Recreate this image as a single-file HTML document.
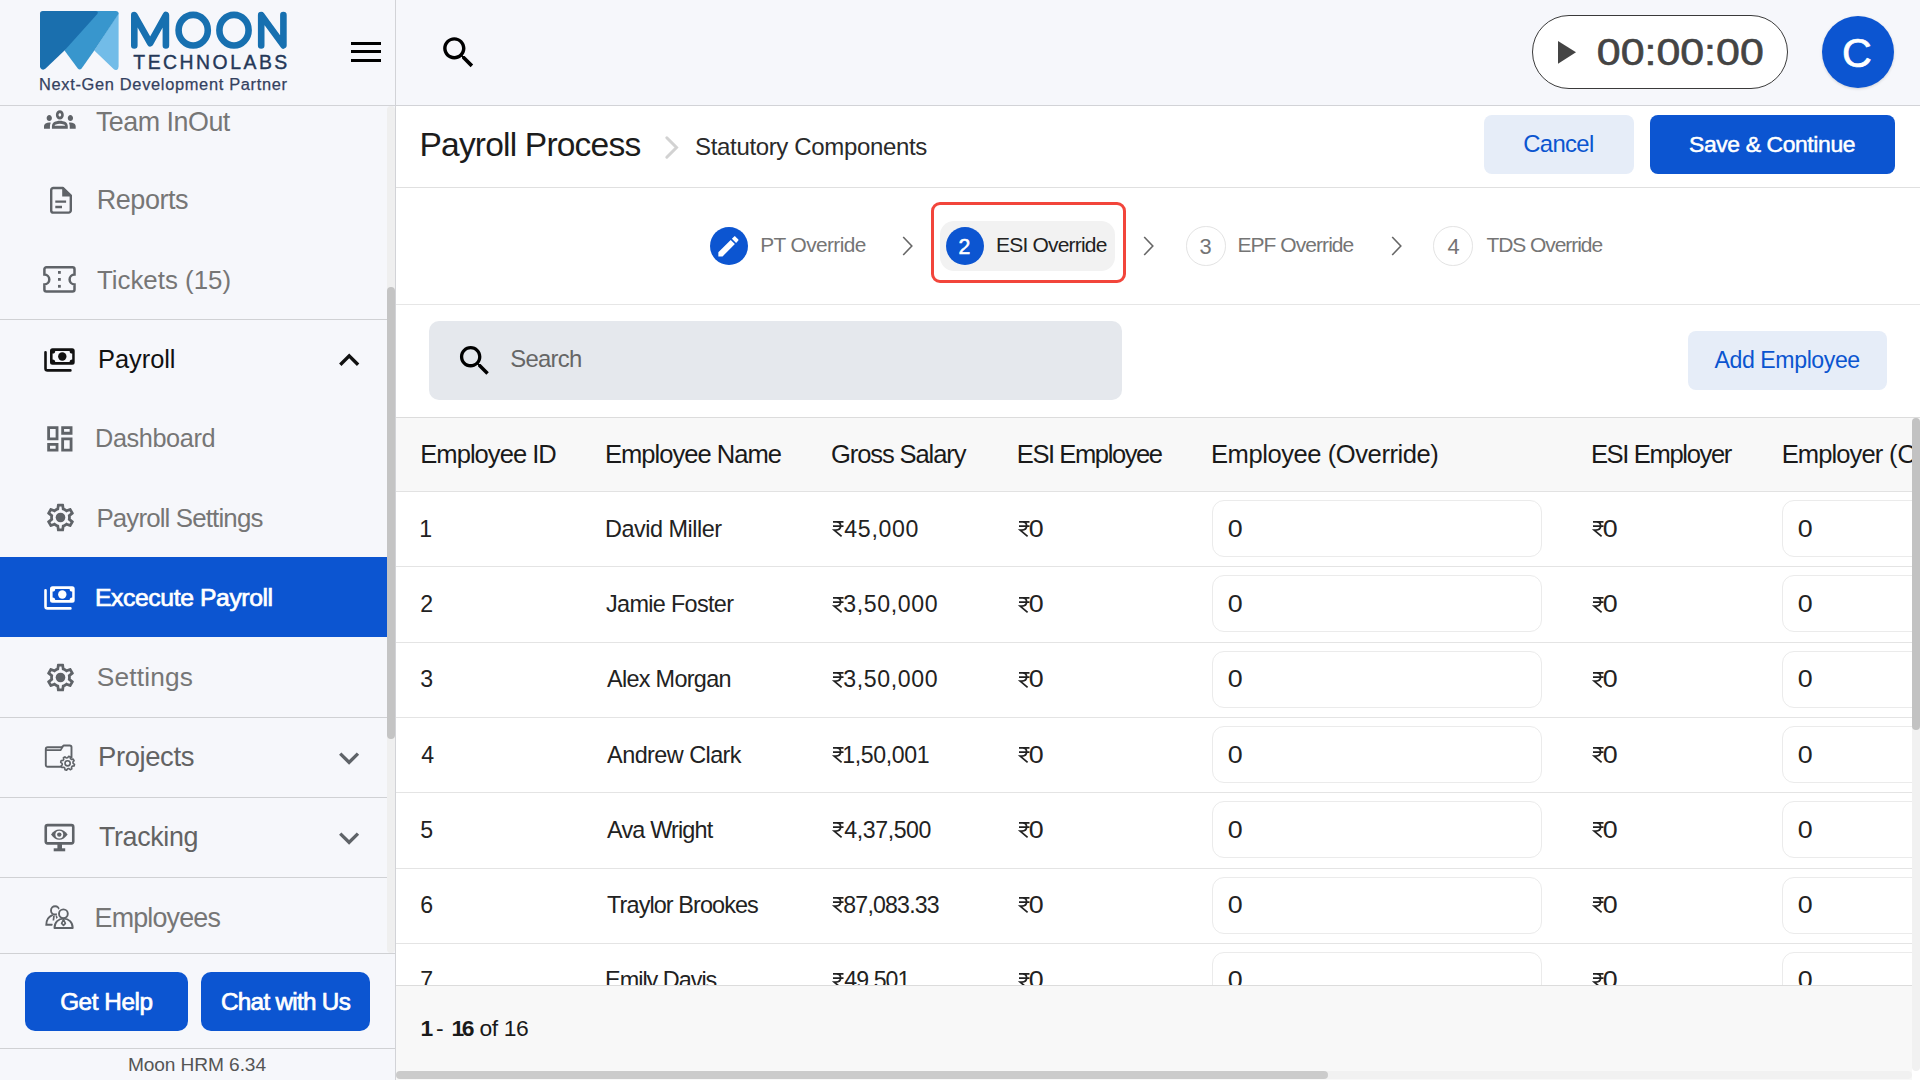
<!DOCTYPE html>
<html lang="en"><head><meta charset="utf-8"><title>Payroll Process - Moon HRM</title>
<style>
*{margin:0;padding:0;box-sizing:border-box}
html,body{width:1920px;height:1080px;overflow:hidden}
body{position:relative;font-family:"Liberation Sans",sans-serif;background:#ffffff}
.a{position:absolute}
.t{position:absolute;white-space:pre}
svg{position:absolute;display:block;overflow:visible}
.hl{position:absolute;height:1px}
</style></head><body>
<!-- ============ SIDEBAR ============ -->
<div class="a" style="left:0;top:0;width:395px;height:1080px;background:#f6f7fb"></div>
<div class="a" style="left:395px;top:0;width:1px;height:1080px;background:#d2d3d7"></div>
<!-- logo -->
<svg style="left:0;top:0" width="300" height="100" viewBox="0 0 300 100">
 <path d="M118.6 13V66.5Q118.6 69.2 116.6 69.9Q115 70.4 113.6 69L94.3 50.4Z" fill="#72bce8"/>
 <path d="M90 11H115.8Q118.6 11 118.6 13.8L94.3 50.4L81.6 68.4Q79.7 70.7 77.8 68.4L64.5 50.4Z" fill="#3896cd"/>
 <path d="M40 13.8Q40 11 42.8 11H95.2Q99 11 97.3 14L64.5 50.4L45.6 68.6Q43.6 70.5 41.6 69.3Q40 68.3 40 66.5Z" fill="#1a6fae"/>
</svg>
<svg style="left:0;top:0" width="300" height="60" viewBox="0 0 300 60"><g fill="none" stroke="#1770b0" stroke-width="6.6" stroke-linecap="round" stroke-linejoin="round"><path d="M134.3 45.4V15L150.2 43.2L165.9 15V45.4"/><ellipse cx="193.2" cy="30.2" rx="14.6" ry="15.3"/><ellipse cx="234" cy="30.2" rx="14.6" ry="15.3"/><path d="M261.2 45.4V15L283.4 45.4V15"/></g></svg>
<div class="t" style="left:133.30px;top:52.75px;font-size:19.36px;line-height:19.36px;letter-spacing:2.522px;font-weight:400;color:#253858;-webkit-text-stroke:0.4px #253858;">TECHNOLABS</div>
<div class="t" style="left:39.00px;top:75.60px;font-size:16.43px;line-height:16.43px;letter-spacing:0.667px;font-weight:400;color:#34415f;-webkit-text-stroke:0.25px #34415f;">Next-Gen Development Partner</div>
<!-- hamburger -->
<div class="a" style="left:351px;top:42px;width:30px;height:3px;background:#000"></div>
<div class="a" style="left:351px;top:50.2px;width:30px;height:3.3px;background:#000"></div>
<div class="a" style="left:351px;top:58.8px;width:30px;height:3.1px;background:#000"></div>
<div class="a" style="left:0;top:105px;width:1920px;height:1px;background:#d2d3d7"></div>

<!-- sidebar scroll region -->
<div class="a" style="left:0;top:106px;width:387px;height:847px;overflow:hidden">
 <div class="a" style="left:0;top:-106px;width:387px;height:1080px">
  <div class="hl" style="left:0;top:319px;width:387px;background:#d0d1d4"></div>
  <div class="hl" style="left:0;top:717px;width:387px;background:#d0d1d4"></div>
  <div class="hl" style="left:0;top:797px;width:387px;background:#d0d1d4"></div>
  <div class="hl" style="left:0;top:877px;width:387px;background:#d0d1d4"></div>
  <div class="a" style="left:0;top:557px;width:387px;height:80px;background:#0c55d1"></div>
 </div>
</div>
<!-- sidebar texts -->
<div class="t" style="left:95.90px;top:108.50px;font-size:26.86px;line-height:26.86px;letter-spacing:-0.489px;font-weight:400;color:#767676;">Team InOut</div>
<div class="t" style="left:96.75px;top:187.10px;font-size:27.0px;line-height:27.0px;letter-spacing:-0.458px;font-weight:400;color:#767676;">Reports</div>
<div class="t" style="left:96.90px;top:267.50px;font-size:25.86px;line-height:25.86px;letter-spacing:0.009px;font-weight:400;color:#767676;">Tickets (15)</div>
<div class="t" style="left:98.00px;top:346.80px;font-size:25.43px;line-height:25.43px;letter-spacing:-0.033px;font-weight:400;color:#111111;">Payroll</div>
<div class="t" style="left:95.10px;top:426.00px;font-size:25.29px;line-height:25.29px;letter-spacing:-0.412px;font-weight:400;color:#767676;">Dashboard</div>
<div class="t" style="left:96.40px;top:506.00px;font-size:25.86px;line-height:25.86px;letter-spacing:-0.847px;font-weight:400;color:#767676;">Payroll Settings</div>
<div class="t" style="left:95.00px;top:586.25px;font-size:24.73px;line-height:24.73px;letter-spacing:-0.400px;font-weight:400;color:#ffffff;-webkit-text-stroke:0.7px #ffffff;">Excecute Payroll</div>
<div class="t" style="left:96.70px;top:663.90px;font-size:26.29px;line-height:26.29px;letter-spacing:0.186px;font-weight:400;color:#767676;">Settings</div>
<div class="t" style="left:98.00px;top:743.40px;font-size:27.43px;line-height:27.43px;letter-spacing:-0.386px;font-weight:400;color:#636363;">Projects</div>
<div class="t" style="left:98.90px;top:823.80px;font-size:26.86px;line-height:26.86px;letter-spacing:-0.343px;font-weight:400;color:#636363;">Tracking</div>
<div class="t" style="left:94.60px;top:904.90px;font-size:26.86px;line-height:26.86px;letter-spacing:-0.825px;font-weight:400;color:#767676;">Employees</div>
<!-- sidebar icons -->
<!-- groups (Team InOut) -->
<svg style="left:44.3px;top:100.8px" width="31.7" height="37" viewBox="0 0 24 24" preserveAspectRatio="none"><path fill="#5f6368" fill-rule="evenodd" d="M4 13c1.1 0 2-.9 2-2s-.9-2-2-2-2 .9-2 2 .9 2 2 2zm1.13 1.1c-.37-.06-.74-.1-1.13-.1-.99 0-1.93.21-2.78.58C.48 14.9 0 15.62 0 16.43V18h4.5v-1.61c0-.83.23-1.61.63-2.29zM20 13c1.1 0 2-.9 2-2s-.9-2-2-2-2 .9-2 2 .9 2 2 2zm4 3.43c0-.81-.48-1.53-1.22-1.85-.85-.37-1.79-.58-2.78-.58-.39 0-.76.04-1.13.1.4.68.63 1.46.63 2.29V18H24v-1.57zm-7.76-2.78c-1.17-.52-2.61-.9-4.24-.9-1.63 0-3.070.39-4.24.9C6.68 14.13 6 15.21 6 16.39V18h12v-1.61c0-1.18-.68-2.26-1.76-2.74zM8.07 16c.09-.23.13-.39.91-.69.97-.38 1.99-.56 3.02-.56s2.05.18 3.02.56c.77.3.81.46.91.69H8.07zM12 8c.55 0 1 .45 1 1s-.45 1-1 1-1-.45-1-1 .45-1 1-1m0-2c-1.66 0-3 1.34-3 3s1.34 3 3 3 3-1.34 3-3-1.34-3-3-3z"/></svg>
<!-- Reports -->
<svg style="left:48px;top:185px" width="28" height="31" viewBox="0 0 28 31"><path d="M3.2 5.1a2.1 2.1 0 0 1 2.1-2.1H15L22.8 10.6V25.4a2.2 2.2 0 0 1-2.2 2.2H5.4a2.2 2.2 0 0 1-2.2-2.2Z" fill="none" stroke="#5f6368" stroke-width="2.4" stroke-linejoin="round"/><path d="M14.2 2.2H15.6L23.8 10.4V11.6H14.2Z" fill="#5f6368"/><path d="M7.3 16.7H18.1M7.3 22H14" stroke="#5f6368" stroke-width="2.3"/></svg>
<!-- ticket -->
<svg style="left:40px;top:263px" width="40" height="33" viewBox="0 0 40 33"><path d="M6.4 4.35H32.5a2 2 0 0 1 2 2V11.6a4.9 4.9 0 0 0 0 9.8V26.5a2 2 0 0 1-2 2H6.4a2 2 0 0 1-2-2V21.4a4.9 4.9 0 0 0 0-9.8V6.35a2 2 0 0 1 2-2Z" fill="none" stroke="#5f6368" stroke-width="2.5"/><rect x="18" y="8" width="2.8" height="2.8" fill="#5f6368"/><rect x="18" y="15" width="2.8" height="2.8" fill="#5f6368"/><rect x="18" y="21.9" width="2.8" height="2.8" fill="#5f6368"/></svg>
<!-- payments (Payroll) -->
<svg style="left:40px;top:344px" width="40" height="30" viewBox="0 0 40 30"><path fill="#111" fill-rule="evenodd" d="M12.5 4.3H32.2a2.5 2.5 0 0 1 2.5 2.5V18.2a2.5 2.5 0 0 1-2.5 2.5H12.5a2.5 2.5 0 0 1-2.5-2.5V6.8a2.5 2.5 0 0 1 2.5-2.5ZM15.2 7A2.6 2.6 0 0 1 12.6 9.6V15.4A2.6 2.6 0 0 1 15.2 18H29.6A2.6 2.6 0 0 1 32.2 15.4V9.6A2.6 2.6 0 0 1 29.6 7Z"/><circle cx="22.3" cy="12.5" r="4.2" fill="#111"/><path d="M5.5 8.3V24.4a2 2 0 0 0 2 2H30.4" fill="none" stroke="#111" stroke-width="2.6" stroke-linecap="round"/></svg>
<!-- expand less -->
<svg style="left:328.8px;top:339.5px" width="40.4" height="40.4" viewBox="0 0 24 24"><path fill="#111" d="M12 8l-6 6 1.41 1.41L12 10.83l4.59 4.58L18 14z"/></svg>
<!-- dashboard -->
<svg style="left:42.7px;top:421.6px" width="33.7" height="33.7" viewBox="0 0 24 24"><path fill="#5f6368" d="M19 5v2h-4V5h4M9 5v6H5V5h4m10 8v6h-4v-6h4M9 17v2H5v-2h4M21 3h-8v6h8V3zM11 3H3v10h8V3zm10 8h-8v10h8V11zm-10 4H3v6h8v-6z"/></svg>
<!-- gear payroll settings -->
<svg style="left:44px;top:500.5px" width="33" height="33" viewBox="0 0 24 24"><path fill="#5f6368" d="M19.43 12.98c.04-.32.07-.64.07-.98 0-.34-.03-.66-.07-.98l2.11-1.65c.19-.15.24-.42.12-.64l-2-3.46c-.09-.16-.26-.25-.44-.25-.06 0-.12.01-.17.03l-2.49 1c-.52-.4-1.08-.73-1.69-.98l-.38-2.65C14.46 2.18 14.25 2 14 2h-4c-.25 0-.46.18-.49.42l-.38 2.65c-.61.25-1.17.59-1.69.98l-2.49-1c-.06-.02-.12-.03-.18-.03-.17 0-.34.09-.43.25l-2 3.46c-.13.22-.07.49.12.64l2.11 1.65c-.04.32-.07.65-.07.98 0 .33.03.66.07.98l-2.11 1.65c-.19.15-.24.42-.12.64l2 3.46c.09.16.26.25.44.25.06 0 .12-.01.17-.03l2.49-1c.52.4 1.08.73 1.69.98l.38 2.65c.03.24.24.42.49.42h4c.25 0 .46-.18.49-.42l.38-2.65c.61-.25 1.17-.59 1.69-.98l2.49 1c.06.02.12.03.18.03.17 0 .34-.09.43-.25l2-3.46c.12-.22.07-.49-.12-.64l-2.11-1.65zm-1.98-1.71c.04.31.05.52.05.73 0 .21-.02.43-.05.73l-.14 1.13.89.7 1.08.84-.7 1.21-1.27-.51-1.04-.42-.9.68c-.43.32-.84.56-1.25.73l-1.06.43-.16 1.13-.2 1.35h-1.4l-.19-1.35-.16-1.13-1.06-.43c-.43-.18-.83-.41-1.23-.71l-.91-.7-1.06.43-1.27.51-.7-1.21 1.08-.84.89-.7-.14-1.13c-.03-.31-.05-.54-.05-.74s.02-.43.05-.73l.14-1.13-.89-.7-1.08-.84.7-1.21 1.27.51 1.04.42.9-.68c.43-.32.84-.56 1.25-.73l1.06-.43.16-1.13.2-1.35h1.39l.19 1.35.16 1.13 1.06.43c.43.18.83.41 1.23.71l.91.7 1.06-.43 1.27-.51.7 1.21-1.07.85-.89.7.14 1.13z"/><circle cx="12" cy="12" r="3.5" fill="#5f6368"/></svg>
<!-- payments white (execute) -->
<svg style="left:40px;top:582px" width="40" height="30" viewBox="0 0 40 30"><path fill="#fff" fill-rule="evenodd" d="M12.5 4.3H32.2a2.5 2.5 0 0 1 2.5 2.5V18.2a2.5 2.5 0 0 1-2.5 2.5H12.5a2.5 2.5 0 0 1-2.5-2.5V6.8a2.5 2.5 0 0 1 2.5-2.5ZM15.2 7A2.6 2.6 0 0 1 12.6 9.6V15.4A2.6 2.6 0 0 1 15.2 18H29.6A2.6 2.6 0 0 1 32.2 15.4V9.6A2.6 2.6 0 0 1 29.6 7Z"/><circle cx="22.3" cy="12.5" r="4.2" fill="#fff"/><path d="M5.5 8.3V24.4a2 2 0 0 0 2 2H30.4" fill="none" stroke="#fff" stroke-width="2.6" stroke-linecap="round"/></svg>
<!-- gear settings -->
<svg style="left:44px;top:660.5px" width="33" height="33" viewBox="0 0 24 24"><path fill="#5f6368" d="M19.43 12.98c.04-.32.07-.64.07-.98 0-.34-.03-.66-.07-.98l2.11-1.65c.19-.15.24-.42.12-.64l-2-3.46c-.09-.16-.26-.25-.44-.25-.06 0-.12.01-.17.03l-2.49 1c-.52-.4-1.08-.73-1.69-.98l-.38-2.65C14.46 2.18 14.25 2 14 2h-4c-.25 0-.46.18-.49.42l-.38 2.65c-.61.25-1.17.59-1.69.98l-2.49-1c-.06-.02-.12-.03-.18-.03-.17 0-.34.09-.43.25l-2 3.46c-.13.22-.07.49.12.64l2.11 1.65c-.04.32-.07.65-.07.98 0 .33.03.66.07.98l-2.11 1.65c-.19.15-.24.42-.12.64l2 3.46c.09.16.26.25.44.25.06 0 .12-.01.17-.03l2.49-1c.52.4 1.08.73 1.69.98l.38 2.65c.03.24.24.42.49.42h4c.25 0 .46-.18.49-.42l.38-2.65c.61-.25 1.17-.59 1.69-.98l2.49 1c.06.02.12.03.18.03.17 0 .34-.09.43-.25l2-3.46c.12-.22.07-.49-.12-.64l-2.11-1.65zm-1.98-1.71c.04.31.05.52.05.73 0 .21-.02.43-.05.73l-.14 1.13.89.7 1.08.84-.7 1.21-1.27-.51-1.04-.42-.9.68c-.43.32-.84.56-1.25.73l-1.06.43-.16 1.13-.2 1.35h-1.4l-.19-1.35-.16-1.13-1.06-.43c-.43-.18-.83-.41-1.23-.71l-.91-.7-1.06.43-1.27.51-.7-1.21 1.08-.84.89-.7-.14-1.13c-.03-.31-.05-.54-.05-.74s.02-.43.05-.73l.14-1.13-.89-.7-1.08-.84.7-1.21 1.27.51 1.04.42.9-.68c.43-.32.84-.56 1.25-.73l1.06-.43.16-1.13.2-1.35h1.39l.19 1.35.16 1.13 1.06.43c.43.18.83.41 1.23.71l.91.7 1.06-.43 1.27-.51.7 1.21-1.07.85-.89.7.14 1.13z"/><circle cx="12" cy="12" r="3.5" fill="#5f6368"/></svg>
<!-- projects folder -->
<svg style="left:38px;top:735px" width="46" height="45" viewBox="0 0 46 45"><path d="M24 31.8H9.6a1.8 1.8 0 0 1-1.8-1.8V14a1.8 1.8 0 0 1 1.8-1.8H23.7L25.7 10.5H31.7a1.8 1.8 0 0 1 1.8 1.8V23.2" fill="none" stroke="#5f6368" stroke-width="1.9" stroke-linejoin="round"/><path d="M7.8 15.2H22.6L24.8 11.6" fill="none" stroke="#5f6368" stroke-width="1.7"/><path d="M35.10 28.30 L36.53 29.29 L36.07 30.98 L34.33 31.10 L33.49 32.19 L33.80 33.90 L32.28 34.77 L30.97 33.63 L29.60 33.80 L28.61 35.23 L26.92 34.77 L26.80 33.03 L25.71 32.19 L24.00 32.50 L23.13 30.98 L24.27 29.67 L24.10 28.30 L22.67 27.31 L23.13 25.62 L24.87 25.50 L25.71 24.41 L25.40 22.70 L26.92 21.83 L28.23 22.97 L29.60 22.80 L30.59 21.37 L32.28 21.83 L32.40 23.57 L33.49 24.41 L35.20 24.10 L36.07 25.62 L34.93 26.93Z" fill="#f6f7fb" stroke="#5f6368" stroke-width="1.6" stroke-linejoin="round"/><circle cx="29.6" cy="28.3" r="2.6" fill="none" stroke="#5f6368" stroke-width="1.6"/></svg>
<!-- expand more -->
<svg style="left:328.65px;top:737.6px" width="40.2" height="40.2" viewBox="0 0 24 24"><path fill="#5f6368" d="M16.59 8.59L12 13.17 7.41 8.59 6 10l6 6 6-6z"/></svg>
<!-- tracking monitor -->
<svg style="left:38px;top:820px" width="46" height="35" viewBox="0 0 46 35"><rect x="7.75" y="5.15" width="27.5" height="18.2" rx="1.8" fill="none" stroke="#5f6368" stroke-width="2.6"/><path d="M13 14.6C15.5 11 18 9.4 21.3 9.4S27 11 29.6 14.6C27 18.2 24.5 19.8 21.3 19.8S15.5 18.2 13 14.6Z" fill="#5f6368"/><circle cx="21.3" cy="14.6" r="3.9" fill="#f6f7fb"/><circle cx="21.3" cy="14.6" r="2.2" fill="#5f6368"/><rect x="19.4" y="24" width="4.6" height="5" fill="#5f6368"/><rect x="15.7" y="28.3" width="11.5" height="3" fill="#5f6368"/></svg>
<svg style="left:328.65px;top:817.7px" width="40.2" height="40.2" viewBox="0 0 24 24"><path fill="#5f6368" d="M16.59 8.59L12 13.17 7.41 8.59 6 10l6 6 6-6z"/></svg>
<!-- employees -->
<svg style="left:40px;top:900px" width="40" height="34" viewBox="0 0 40 34"><circle cx="15.1" cy="10.4" r="4.1" fill="none" stroke="#5f6368" stroke-width="1.9"/><path d="M12.3 15.2C8.6 16.8 6.3 20.5 6.3 24.8H12" fill="none" stroke="#5f6368" stroke-width="1.9" stroke-linecap="round"/><path d="M14 15.5L13.4 20.5M16.4 15.5L17.2 19" stroke="#5f6368" stroke-width="1.7"/><circle cx="23.4" cy="13.8" r="4.4" fill="#f6f7fb" stroke="#f6f7fb" stroke-width="4.5"/><path d="M14.5 28C14.5 22.2 18.5 18.6 23.6 18.6S32.7 22.2 32.7 28Z" fill="#f6f7fb" stroke="#f6f7fb" stroke-width="4.5" stroke-linejoin="round"/><circle cx="23.4" cy="13.8" r="4.4" fill="none" stroke="#5f6368" stroke-width="1.9"/><path d="M14.5 28C14.5 22.2 18.5 18.6 23.6 18.6S32.7 22.2 32.7 28Z" fill="none" stroke="#5f6368" stroke-width="1.9" stroke-linejoin="round"/><path d="M23.5 19.5L21.6 23.4L23.5 25.4L25.4 23.4Z" fill="none" stroke="#5f6368" stroke-width="1.6" stroke-linejoin="round"/></svg>
<!-- sidebar scrollbar -->
<div class="a" style="left:387px;top:106px;width:8px;height:847px;background:#efefef;border-radius:4px"></div>
<div class="a" style="left:387px;top:287px;width:8px;height:452px;background:#c4c4c4;border-radius:4px"></div>
<div class="a" style="left:0;top:953px;width:395px;height:1px;background:#d0d1d4"></div>
<!-- sidebar bottom -->
<div class="a" style="left:25px;top:972px;width:163px;height:59px;background:#0c55d1;border-radius:10px"></div>
<div class="a" style="left:201px;top:972px;width:169px;height:59px;background:#0c55d1;border-radius:10px"></div>
<div class="t" style="left:60.20px;top:989.60px;font-size:24.25px;line-height:24.25px;letter-spacing:-0.429px;font-weight:400;color:#ffffff;-webkit-text-stroke:0.7px #ffffff;">Get Help</div>
<div class="t" style="left:221.00px;top:989.60px;font-size:24.25px;line-height:24.25px;letter-spacing:-0.700px;font-weight:400;color:#ffffff;-webkit-text-stroke:0.7px #ffffff;">Chat with Us</div>
<div class="a" style="left:0;top:1048px;width:395px;height:1px;background:#d0d1d4"></div>
<div class="t" style="left:127.90px;top:1054.50px;font-size:19.14px;line-height:19.14px;letter-spacing:-0.092px;font-weight:400;color:#555555;">Moon HRM 6.34</div>

<!-- ============ TOP BAR ============ -->
<div class="a" style="left:396px;top:0;width:1524px;height:105px;background:#f6f7fb"></div>
<svg style="left:437.85px;top:32.35px" width="41.2" height="41.2" viewBox="0 0 24 24"><path fill="#000" d="M15.5 14h-.79l-.28-.27C15.41 12.59 16 11.11 16 9.5 16 5.91 13.09 3 9.5 3S3 5.91 3 9.5 5.91 16 9.5 16c1.61 0 3.09-.59 4.23-1.57l.27.28v.79l5 4.99L20.49 19l-4.99-5zm-6 0C7.01 14 5 11.99 5 9.5S7.01 5 9.5 5 14 7.01 14 9.5 11.99 14 9.5 14z"/></svg>
<div class="a" style="left:1532px;top:15px;width:256px;height:73.5px;border:1.5px solid #3a3a3a;border-radius:37px;background:#fff"></div>
<svg style="left:1558px;top:41px" width="18" height="23" viewBox="0 0 18 23"><polygon points="0,0 18,11.35 0,22.7" fill="#444"/></svg>
<div class="t" style="left:1597.00px;top:34.80px;font-size:36.03px;line-height:36.03px;letter-spacing:0.000px;font-weight:400;color:#444444;-webkit-text-stroke:0.6px #444444;transform:scaleX(1.1906);transform-origin:1.0px 0;">00:00:00</div>
<div class="a" style="left:1822px;top:16px;width:72px;height:72px;border-radius:50%;background:#0c55d1;box-shadow:0 1px 3px rgba(0,0,0,.15)"></div>
<div class="t" style="left:1842.00px;top:33.00px;font-size:41.18px;line-height:41.18px;letter-spacing:0.000px;font-weight:400;color:#ffffff;-webkit-text-stroke:0.7px #ffffff;">C</div>

<!-- ============ BREADCRUMB ============ -->
<div class="t" style="left:419.50px;top:128.00px;font-size:33.57px;line-height:33.57px;letter-spacing:-0.821px;font-weight:400;color:#1c1c1c;">Payroll Process</div>
<svg style="left:665px;top:136px" width="14" height="23" viewBox="0 0 14 23"><path d="M1.8 1.8L11.5 11.5 1.8 21.2" fill="none" stroke="#d2d2d2" stroke-width="3" stroke-linecap="round"/></svg>
<div class="t" style="left:695.10px;top:135.20px;font-size:24.0px;line-height:24.0px;letter-spacing:-0.347px;font-weight:400;color:#2a2a2a;">Statutory Components</div>
<div class="a" style="left:1484px;top:115px;width:150px;height:58.5px;background:#e6edf8;border-radius:8px"></div>
<div class="t" style="left:1523.20px;top:132.20px;font-size:23.86px;line-height:23.86px;letter-spacing:-0.640px;font-weight:400;color:#0b55d0;">Cancel</div>
<div class="a" style="left:1650px;top:115px;width:245px;height:58.5px;background:#0c55d1;border-radius:8px"></div>
<div class="t" style="left:1689.00px;top:133.20px;font-size:22.88px;line-height:22.88px;letter-spacing:-0.371px;font-weight:400;color:#ffffff;-webkit-text-stroke:0.5px #ffffff;">Save &amp; Continue</div>
<div class="a" style="left:396px;top:187px;width:1524px;height:1px;background:#e0e0e0"></div>

<!-- ============ STEPPER ============ -->
<div class="a" style="left:710px;top:227px;width:38px;height:38px;border-radius:50%;background:#0c55d1"></div>
<svg style="left:714.8px;top:232.6px" width="26.8" height="26.8" viewBox="0 0 24 24"><path fill="#fff" d="M3 17.25V21h3.75L17.81 9.94l-3.75-3.75L3 17.25zM20.71 7.04c.39-.39.39-1.02 0-1.41l-2.34-2.34c-.39-.39-1.02-.39-1.41 0l-1.83 1.83 3.75 3.75 1.83-1.83z"/></svg>
<div class="t" style="left:760.20px;top:234.90px;font-size:20.86px;line-height:20.86px;letter-spacing:-0.590px;font-weight:400;color:#757575;">PT Override</div>
<svg style="left:902px;top:236px" width="11" height="20" viewBox="0 0 11 20"><path d="M1.2 1l8.6 9L1.2 19" fill="none" stroke="#666" stroke-width="1.6"/></svg>
<div class="a" style="left:930.5px;top:201.5px;width:195px;height:81px;border:3.5px solid #f2453b;border-radius:9px"></div>
<div class="a" style="left:940px;top:221px;width:175px;height:49.5px;border-radius:14px;background:#f2f2f2"></div>
<div class="a" style="left:946px;top:227px;width:38px;height:38px;border-radius:50%;background:#0c55d1"></div>
<div class="t" style="left:958.60px;top:236.70px;font-size:21.3px;line-height:21.3px;letter-spacing:0.000px;font-weight:400;color:#ffffff;-webkit-text-stroke:0.5px #ffffff;">2</div>
<div class="t" style="left:996.00px;top:234.00px;font-size:21.0px;line-height:21.0px;letter-spacing:-0.800px;font-weight:400;color:#222222;">ESI Override</div>
<svg style="left:1143px;top:236px" width="11" height="20" viewBox="0 0 11 20"><path d="M1.2 1l8.6 9L1.2 19" fill="none" stroke="#666" stroke-width="1.6"/></svg>
<div class="a" style="left:1186.3px;top:226px;width:39.5px;height:39.5px;border-radius:50%;border:1px solid #e3e3e3"></div>
<div class="t" style="left:1199.40px;top:235.70px;font-size:21.88px;line-height:21.88px;letter-spacing:0.000px;font-weight:400;color:#757575;">3</div>
<div class="t" style="left:1237.40px;top:234.00px;font-size:21.0px;line-height:21.0px;letter-spacing:-0.936px;font-weight:400;color:#757575;">EPF Override</div>
<svg style="left:1390.5px;top:236px" width="11" height="20" viewBox="0 0 11 20"><path d="M1.2 1l8.6 9L1.2 19" fill="none" stroke="#666" stroke-width="1.6"/></svg>
<div class="a" style="left:1433.3px;top:226px;width:39.5px;height:39.5px;border-radius:50%;border:1px solid #e3e3e3"></div>
<div class="t" style="left:1447.50px;top:235.70px;font-size:21.88px;line-height:21.88px;letter-spacing:0.000px;font-weight:400;color:#757575;">4</div>
<div class="t" style="left:1486.40px;top:234.00px;font-size:21.0px;line-height:21.0px;letter-spacing:-1.055px;font-weight:400;color:#757575;">TDS Override</div>
<div class="a" style="left:396px;top:304px;width:1524px;height:1px;background:#e6e6e6"></div>

<!-- ============ SEARCH ROW ============ -->
<div class="a" style="left:429px;top:321px;width:693px;height:79px;background:#e5e8ed;border-radius:10px"></div>
<svg style="left:454.55px;top:340.85px" width="39.6" height="39.6" viewBox="0 0 24 24"><path fill="#000" d="M15.5 14h-.79l-.28-.27C15.41 12.59 16 11.11 16 9.5 16 5.91 13.09 3 9.5 3S3 5.910 3 9.5 5.91 16 9.5 16c1.61 0 3.09-.59 4.23-1.57l.27.28v.79l5 4.99L20.49 19l-4.99-5zm-6 0C7.01 14 5 11.99 5 9.5S7.01 5 9.5 5 14 7.01 14 9.5 11.99 14 9.5 14z"/></svg>
<div class="t" style="left:510.30px;top:346.50px;font-size:23.86px;line-height:23.86px;letter-spacing:-0.720px;font-weight:400;color:#666666;">Search</div>
<div class="a" style="left:1688px;top:331px;width:199px;height:58.5px;background:#e6edf8;border-radius:8px"></div>
<div class="t" style="left:1714.50px;top:348.90px;font-size:23.14px;line-height:23.14px;letter-spacing:-0.427px;font-weight:400;color:#0b55d0;">Add Employee</div>

<!-- ============ TABLE ============ -->
<div class="a" style="left:396px;top:417px;width:1524px;height:1px;background:#dcdcdc"></div>
<div class="a" style="left:396px;top:418px;width:1524px;height:73px;background:#f8f8f8"></div>
<div class="a" style="left:396px;top:491px;width:1524px;height:1px;background:#e2e2e2"></div>
<div class="a" id="hdr" style="left:396px;top:0;width:1516px;height:1080px;overflow:hidden;clip-path:inset(418px 0 0 0)">
 <div class="a" style="left:-396px;top:0;width:1920px;height:1080px">
<div class="t" style="left:420.30px;top:441.90px;font-size:25.57px;line-height:25.57px;letter-spacing:-0.980px;font-weight:400;color:#1a1a1a;">Employee ID</div>
<div class="t" style="left:604.90px;top:441.90px;font-size:25.57px;line-height:25.57px;letter-spacing:-0.992px;font-weight:400;color:#1a1a1a;">Employee Name</div>
<div class="t" style="left:831.00px;top:441.90px;font-size:25.57px;line-height:25.57px;letter-spacing:-1.118px;font-weight:400;color:#1a1a1a;">Gross Salary</div>
<div class="t" style="left:1016.75px;top:441.90px;font-size:25.57px;line-height:25.57px;letter-spacing:-1.423px;font-weight:400;color:#1a1a1a;">ESI Employee</div>
<div class="t" style="left:1211.00px;top:441.90px;font-size:25.57px;line-height:25.57px;letter-spacing:-0.444px;font-weight:400;color:#1a1a1a;">Employee (Override)</div>
<div class="t" style="left:1590.90px;top:441.90px;font-size:25.57px;line-height:25.57px;letter-spacing:-1.345px;font-weight:400;color:#1a1a1a;">ESI Employer</div>
<div class="t" style="left:1781.70px;top:441.90px;font-size:25.57px;line-height:25.57px;letter-spacing:-0.914px;font-weight:400;color:#1a1a1a;">Employer</div>
<div class="t" style="left:1889.00px;top:441.90px;font-size:25.57px;line-height:25.57px;letter-spacing:0.000px;font-weight:400;color:#1a1a1a;">(Override)</div>
 </div>
</div>
<div class="a" id="rows" style="left:396px;top:492px;width:1516px;height:493px;overflow:hidden">
 <div class="a" style="left:-396px;top:-492px;width:1920px;height:1080px">
<div class="a" style="left:1212px;top:500px;width:330px;height:57px;border:1px solid #ebebeb;border-radius:12px;background:#fff"></div>
<div class="a" style="left:1782px;top:500px;width:330px;height:57px;border:1px solid #ebebeb;border-radius:12px;background:#fff"></div>
<svg style="left:833px;top:521.40px" width="10.5" height="15.6" viewBox="0 0 10.5 15.6"><path d="M0 0.9H10.5M0 5.2H10.5M0.4 0.9H3.6C6.6 0.9 7.6 2.8 7.6 5.1C7.6 7.6 5.7 9.1 2.8 9.1H1.2L8.6 15.4" fill="none" stroke="#222" stroke-width="1.75"/></svg>
<svg style="left:1018.7px;top:521.40px" width="10.5" height="15.6" viewBox="0 0 10.5 15.6"><path d="M0 0.9H10.5M0 5.2H10.5M0.4 0.9H3.6C6.6 0.9 7.6 2.8 7.6 5.1C7.6 7.6 5.7 9.1 2.8 9.1H1.2L8.6 15.4" fill="none" stroke="#222" stroke-width="1.75"/></svg>
<svg style="left:1593px;top:521.40px" width="10.5" height="15.6" viewBox="0 0 10.5 15.6"><path d="M0 0.9H10.5M0 5.2H10.5M0.4 0.9H3.6C6.6 0.9 7.6 2.8 7.6 5.1C7.6 7.6 5.7 9.1 2.8 9.1H1.2L8.6 15.4" fill="none" stroke="#222" stroke-width="1.75"/></svg>
<div class="t" style="left:419.30px;top:518.00px;font-size:23.14px;line-height:23.14px;letter-spacing:0.000px;font-weight:400;color:#222222;">1</div>
<div class="t" style="left:605.10px;top:518.00px;font-size:23.43px;line-height:23.43px;letter-spacing:-0.491px;font-weight:400;color:#222222;">David Miller</div>
<div class="t" style="left:844.30px;top:518.00px;font-size:23.14px;line-height:23.14px;letter-spacing:0.680px;font-weight:400;color:#222222;">45,000</div>
<div class="t" style="left:1029.00px;top:518.00px;font-size:23.14px;line-height:23.14px;letter-spacing:0.000px;font-weight:400;color:#222222;transform:scaleX(1.16);transform-origin:1.0px 0;">0</div>
<div class="t" style="left:1228.30px;top:518.00px;font-size:23.14px;line-height:23.14px;letter-spacing:0.000px;font-weight:400;color:#222222;transform:scaleX(1.16);transform-origin:1.0px 0;">0</div>
<div class="t" style="left:1603.30px;top:518.00px;font-size:23.14px;line-height:23.14px;letter-spacing:0.000px;font-weight:400;color:#222222;transform:scaleX(1.16);transform-origin:1.0px 0;">0</div>
<div class="t" style="left:1798.40px;top:518.00px;font-size:23.14px;line-height:23.14px;letter-spacing:0.000px;font-weight:400;color:#222222;transform:scaleX(1.16);transform-origin:1.0px 0;">0</div>
<div class="hl" style="left:396px;top:566px;width:1524px;background:#e4e4e4"></div>
<div class="a" style="left:1212px;top:575px;width:330px;height:57px;border:1px solid #ebebeb;border-radius:12px;background:#fff"></div>
<div class="a" style="left:1782px;top:575px;width:330px;height:57px;border:1px solid #ebebeb;border-radius:12px;background:#fff"></div>
<svg style="left:833px;top:596.60px" width="10.5" height="15.6" viewBox="0 0 10.5 15.6"><path d="M0 0.9H10.5M0 5.2H10.5M0.4 0.9H3.6C6.6 0.9 7.6 2.8 7.6 5.1C7.6 7.6 5.7 9.1 2.8 9.1H1.2L8.6 15.4" fill="none" stroke="#222" stroke-width="1.75"/></svg>
<svg style="left:1018.7px;top:596.60px" width="10.5" height="15.6" viewBox="0 0 10.5 15.6"><path d="M0 0.9H10.5M0 5.2H10.5M0.4 0.9H3.6C6.6 0.9 7.6 2.8 7.6 5.1C7.6 7.6 5.7 9.1 2.8 9.1H1.2L8.6 15.4" fill="none" stroke="#222" stroke-width="1.75"/></svg>
<svg style="left:1593px;top:596.60px" width="10.5" height="15.6" viewBox="0 0 10.5 15.6"><path d="M0 0.9H10.5M0 5.2H10.5M0.4 0.9H3.6C6.6 0.9 7.6 2.8 7.6 5.1C7.6 7.6 5.7 9.1 2.8 9.1H1.2L8.6 15.4" fill="none" stroke="#222" stroke-width="1.75"/></svg>
<div class="t" style="left:420.30px;top:593.20px;font-size:23.14px;line-height:23.14px;letter-spacing:0.000px;font-weight:400;color:#222222;">2</div>
<div class="t" style="left:606.10px;top:593.20px;font-size:23.43px;line-height:23.43px;letter-spacing:-0.682px;font-weight:400;color:#222222;">Jamie Foster</div>
<div class="t" style="left:843.30px;top:593.20px;font-size:23.14px;line-height:23.14px;letter-spacing:0.614px;font-weight:400;color:#222222;">3,50,000</div>
<div class="t" style="left:1029.00px;top:593.20px;font-size:23.14px;line-height:23.14px;letter-spacing:0.000px;font-weight:400;color:#222222;transform:scaleX(1.16);transform-origin:1.0px 0;">0</div>
<div class="t" style="left:1228.30px;top:593.20px;font-size:23.14px;line-height:23.14px;letter-spacing:0.000px;font-weight:400;color:#222222;transform:scaleX(1.16);transform-origin:1.0px 0;">0</div>
<div class="t" style="left:1603.30px;top:593.20px;font-size:23.14px;line-height:23.14px;letter-spacing:0.000px;font-weight:400;color:#222222;transform:scaleX(1.16);transform-origin:1.0px 0;">0</div>
<div class="t" style="left:1798.40px;top:593.20px;font-size:23.14px;line-height:23.14px;letter-spacing:0.000px;font-weight:400;color:#222222;transform:scaleX(1.16);transform-origin:1.0px 0;">0</div>
<div class="hl" style="left:396px;top:642px;width:1524px;background:#e4e4e4"></div>
<div class="a" style="left:1212px;top:651px;width:330px;height:57px;border:1px solid #ebebeb;border-radius:12px;background:#fff"></div>
<div class="a" style="left:1782px;top:651px;width:330px;height:57px;border:1px solid #ebebeb;border-radius:12px;background:#fff"></div>
<svg style="left:833px;top:671.80px" width="10.5" height="15.6" viewBox="0 0 10.5 15.6"><path d="M0 0.9H10.5M0 5.2H10.5M0.4 0.9H3.6C6.6 0.9 7.6 2.8 7.6 5.1C7.6 7.6 5.7 9.1 2.8 9.1H1.2L8.6 15.4" fill="none" stroke="#222" stroke-width="1.75"/></svg>
<svg style="left:1018.7px;top:671.80px" width="10.5" height="15.6" viewBox="0 0 10.5 15.6"><path d="M0 0.9H10.5M0 5.2H10.5M0.4 0.9H3.6C6.6 0.9 7.6 2.8 7.6 5.1C7.6 7.6 5.7 9.1 2.8 9.1H1.2L8.6 15.4" fill="none" stroke="#222" stroke-width="1.75"/></svg>
<svg style="left:1593px;top:671.80px" width="10.5" height="15.6" viewBox="0 0 10.5 15.6"><path d="M0 0.9H10.5M0 5.2H10.5M0.4 0.9H3.6C6.6 0.9 7.6 2.8 7.6 5.1C7.6 7.6 5.7 9.1 2.8 9.1H1.2L8.6 15.4" fill="none" stroke="#222" stroke-width="1.75"/></svg>
<div class="t" style="left:420.30px;top:668.40px;font-size:23.14px;line-height:23.14px;letter-spacing:0.000px;font-weight:400;color:#222222;">3</div>
<div class="t" style="left:607.10px;top:668.40px;font-size:23.43px;line-height:23.43px;letter-spacing:-0.710px;font-weight:400;color:#222222;">Alex Morgan</div>
<div class="t" style="left:843.30px;top:668.40px;font-size:23.14px;line-height:23.14px;letter-spacing:0.614px;font-weight:400;color:#222222;">3,50,000</div>
<div class="t" style="left:1029.00px;top:668.40px;font-size:23.14px;line-height:23.14px;letter-spacing:0.000px;font-weight:400;color:#222222;transform:scaleX(1.16);transform-origin:1.0px 0;">0</div>
<div class="t" style="left:1228.30px;top:668.40px;font-size:23.14px;line-height:23.14px;letter-spacing:0.000px;font-weight:400;color:#222222;transform:scaleX(1.16);transform-origin:1.0px 0;">0</div>
<div class="t" style="left:1603.30px;top:668.40px;font-size:23.14px;line-height:23.14px;letter-spacing:0.000px;font-weight:400;color:#222222;transform:scaleX(1.16);transform-origin:1.0px 0;">0</div>
<div class="t" style="left:1798.40px;top:668.40px;font-size:23.14px;line-height:23.14px;letter-spacing:0.000px;font-weight:400;color:#222222;transform:scaleX(1.16);transform-origin:1.0px 0;">0</div>
<div class="hl" style="left:396px;top:717px;width:1524px;background:#e4e4e4"></div>
<div class="a" style="left:1212px;top:726px;width:330px;height:57px;border:1px solid #ebebeb;border-radius:12px;background:#fff"></div>
<div class="a" style="left:1782px;top:726px;width:330px;height:57px;border:1px solid #ebebeb;border-radius:12px;background:#fff"></div>
<svg style="left:833px;top:747.00px" width="10.5" height="15.6" viewBox="0 0 10.5 15.6"><path d="M0 0.9H10.5M0 5.2H10.5M0.4 0.9H3.6C6.6 0.9 7.6 2.8 7.6 5.1C7.6 7.6 5.7 9.1 2.8 9.1H1.2L8.6 15.4" fill="none" stroke="#222" stroke-width="1.75"/></svg>
<svg style="left:1018.7px;top:747.00px" width="10.5" height="15.6" viewBox="0 0 10.5 15.6"><path d="M0 0.9H10.5M0 5.2H10.5M0.4 0.9H3.6C6.6 0.9 7.6 2.8 7.6 5.1C7.6 7.6 5.7 9.1 2.8 9.1H1.2L8.6 15.4" fill="none" stroke="#222" stroke-width="1.75"/></svg>
<svg style="left:1593px;top:747.00px" width="10.5" height="15.6" viewBox="0 0 10.5 15.6"><path d="M0 0.9H10.5M0 5.2H10.5M0.4 0.9H3.6C6.6 0.9 7.6 2.8 7.6 5.1C7.6 7.6 5.7 9.1 2.8 9.1H1.2L8.6 15.4" fill="none" stroke="#222" stroke-width="1.75"/></svg>
<div class="t" style="left:421.30px;top:743.60px;font-size:23.14px;line-height:23.14px;letter-spacing:0.000px;font-weight:400;color:#222222;">4</div>
<div class="t" style="left:607.10px;top:743.60px;font-size:23.43px;line-height:23.43px;letter-spacing:-0.555px;font-weight:400;color:#222222;">Andrew Clark</div>
<div class="t" style="left:842.30px;top:743.60px;font-size:23.14px;line-height:23.14px;letter-spacing:-0.386px;font-weight:400;color:#222222;">1,50,001</div>
<div class="t" style="left:1029.00px;top:743.60px;font-size:23.14px;line-height:23.14px;letter-spacing:0.000px;font-weight:400;color:#222222;transform:scaleX(1.16);transform-origin:1.0px 0;">0</div>
<div class="t" style="left:1228.30px;top:743.60px;font-size:23.14px;line-height:23.14px;letter-spacing:0.000px;font-weight:400;color:#222222;transform:scaleX(1.16);transform-origin:1.0px 0;">0</div>
<div class="t" style="left:1603.30px;top:743.60px;font-size:23.14px;line-height:23.14px;letter-spacing:0.000px;font-weight:400;color:#222222;transform:scaleX(1.16);transform-origin:1.0px 0;">0</div>
<div class="t" style="left:1798.40px;top:743.60px;font-size:23.14px;line-height:23.14px;letter-spacing:0.000px;font-weight:400;color:#222222;transform:scaleX(1.16);transform-origin:1.0px 0;">0</div>
<div class="hl" style="left:396px;top:792px;width:1524px;background:#e4e4e4"></div>
<div class="a" style="left:1212px;top:801px;width:330px;height:57px;border:1px solid #ebebeb;border-radius:12px;background:#fff"></div>
<div class="a" style="left:1782px;top:801px;width:330px;height:57px;border:1px solid #ebebeb;border-radius:12px;background:#fff"></div>
<svg style="left:833px;top:822.20px" width="10.5" height="15.6" viewBox="0 0 10.5 15.6"><path d="M0 0.9H10.5M0 5.2H10.5M0.4 0.9H3.6C6.6 0.9 7.6 2.8 7.6 5.1C7.6 7.6 5.7 9.1 2.8 9.1H1.2L8.6 15.4" fill="none" stroke="#222" stroke-width="1.75"/></svg>
<svg style="left:1018.7px;top:822.20px" width="10.5" height="15.6" viewBox="0 0 10.5 15.6"><path d="M0 0.9H10.5M0 5.2H10.5M0.4 0.9H3.6C6.6 0.9 7.6 2.8 7.6 5.1C7.6 7.6 5.7 9.1 2.8 9.1H1.2L8.6 15.4" fill="none" stroke="#222" stroke-width="1.75"/></svg>
<svg style="left:1593px;top:822.20px" width="10.5" height="15.6" viewBox="0 0 10.5 15.6"><path d="M0 0.9H10.5M0 5.2H10.5M0.4 0.9H3.6C6.6 0.9 7.6 2.8 7.6 5.1C7.6 7.6 5.7 9.1 2.8 9.1H1.2L8.6 15.4" fill="none" stroke="#222" stroke-width="1.75"/></svg>
<div class="t" style="left:420.30px;top:818.80px;font-size:23.14px;line-height:23.14px;letter-spacing:0.000px;font-weight:400;color:#222222;">5</div>
<div class="t" style="left:607.10px;top:818.80px;font-size:23.43px;line-height:23.43px;letter-spacing:-0.844px;font-weight:400;color:#222222;">Ava Wright</div>
<div class="t" style="left:844.30px;top:818.80px;font-size:23.14px;line-height:23.14px;letter-spacing:-0.414px;font-weight:400;color:#222222;">4,37,500</div>
<div class="t" style="left:1029.00px;top:818.80px;font-size:23.14px;line-height:23.14px;letter-spacing:0.000px;font-weight:400;color:#222222;transform:scaleX(1.16);transform-origin:1.0px 0;">0</div>
<div class="t" style="left:1228.30px;top:818.80px;font-size:23.14px;line-height:23.14px;letter-spacing:0.000px;font-weight:400;color:#222222;transform:scaleX(1.16);transform-origin:1.0px 0;">0</div>
<div class="t" style="left:1603.30px;top:818.80px;font-size:23.14px;line-height:23.14px;letter-spacing:0.000px;font-weight:400;color:#222222;transform:scaleX(1.16);transform-origin:1.0px 0;">0</div>
<div class="t" style="left:1798.40px;top:818.80px;font-size:23.14px;line-height:23.14px;letter-spacing:0.000px;font-weight:400;color:#222222;transform:scaleX(1.16);transform-origin:1.0px 0;">0</div>
<div class="hl" style="left:396px;top:867.5px;width:1524px;background:#e4e4e4"></div>
<div class="a" style="left:1212px;top:876.5px;width:330px;height:57px;border:1px solid #ebebeb;border-radius:12px;background:#fff"></div>
<div class="a" style="left:1782px;top:876.5px;width:330px;height:57px;border:1px solid #ebebeb;border-radius:12px;background:#fff"></div>
<svg style="left:833px;top:897.40px" width="10.5" height="15.6" viewBox="0 0 10.5 15.6"><path d="M0 0.9H10.5M0 5.2H10.5M0.4 0.9H3.6C6.6 0.9 7.6 2.8 7.6 5.1C7.6 7.6 5.7 9.1 2.8 9.1H1.2L8.6 15.4" fill="none" stroke="#222" stroke-width="1.75"/></svg>
<svg style="left:1018.7px;top:897.40px" width="10.5" height="15.6" viewBox="0 0 10.5 15.6"><path d="M0 0.9H10.5M0 5.2H10.5M0.4 0.9H3.6C6.6 0.9 7.6 2.8 7.6 5.1C7.6 7.6 5.7 9.1 2.8 9.1H1.2L8.6 15.4" fill="none" stroke="#222" stroke-width="1.75"/></svg>
<svg style="left:1593px;top:897.40px" width="10.5" height="15.6" viewBox="0 0 10.5 15.6"><path d="M0 0.9H10.5M0 5.2H10.5M0.4 0.9H3.6C6.6 0.9 7.6 2.8 7.6 5.1C7.6 7.6 5.7 9.1 2.8 9.1H1.2L8.6 15.4" fill="none" stroke="#222" stroke-width="1.75"/></svg>
<div class="t" style="left:420.30px;top:894.00px;font-size:23.14px;line-height:23.14px;letter-spacing:0.000px;font-weight:400;color:#222222;">6</div>
<div class="t" style="left:607.10px;top:894.00px;font-size:23.43px;line-height:23.43px;letter-spacing:-0.907px;font-weight:400;color:#222222;">Traylor Brookes</div>
<div class="t" style="left:843.30px;top:894.00px;font-size:23.14px;line-height:23.14px;letter-spacing:-0.812px;font-weight:400;color:#222222;">87,083.33</div>
<div class="t" style="left:1029.00px;top:894.00px;font-size:23.14px;line-height:23.14px;letter-spacing:0.000px;font-weight:400;color:#222222;transform:scaleX(1.16);transform-origin:1.0px 0;">0</div>
<div class="t" style="left:1228.30px;top:894.00px;font-size:23.14px;line-height:23.14px;letter-spacing:0.000px;font-weight:400;color:#222222;transform:scaleX(1.16);transform-origin:1.0px 0;">0</div>
<div class="t" style="left:1603.30px;top:894.00px;font-size:23.14px;line-height:23.14px;letter-spacing:0.000px;font-weight:400;color:#222222;transform:scaleX(1.16);transform-origin:1.0px 0;">0</div>
<div class="t" style="left:1798.40px;top:894.00px;font-size:23.14px;line-height:23.14px;letter-spacing:0.000px;font-weight:400;color:#222222;transform:scaleX(1.16);transform-origin:1.0px 0;">0</div>
<div class="hl" style="left:396px;top:943px;width:1524px;background:#e4e4e4"></div>
<div class="a" style="left:1212px;top:952px;width:330px;height:57px;border:1px solid #ebebeb;border-radius:12px;background:#fff"></div>
<div class="a" style="left:1782px;top:952px;width:330px;height:57px;border:1px solid #ebebeb;border-radius:12px;background:#fff"></div>
<svg style="left:833px;top:972.60px" width="10.5" height="15.6" viewBox="0 0 10.5 15.6"><path d="M0 0.9H10.5M0 5.2H10.5M0.4 0.9H3.6C6.6 0.9 7.6 2.8 7.6 5.1C7.6 7.6 5.7 9.1 2.8 9.1H1.2L8.6 15.4" fill="none" stroke="#222" stroke-width="1.75"/></svg>
<svg style="left:1018.7px;top:972.60px" width="10.5" height="15.6" viewBox="0 0 10.5 15.6"><path d="M0 0.9H10.5M0 5.2H10.5M0.4 0.9H3.6C6.6 0.9 7.6 2.8 7.6 5.1C7.6 7.6 5.7 9.1 2.8 9.1H1.2L8.6 15.4" fill="none" stroke="#222" stroke-width="1.75"/></svg>
<svg style="left:1593px;top:972.60px" width="10.5" height="15.6" viewBox="0 0 10.5 15.6"><path d="M0 0.9H10.5M0 5.2H10.5M0.4 0.9H3.6C6.6 0.9 7.6 2.8 7.6 5.1C7.6 7.6 5.7 9.1 2.8 9.1H1.2L8.6 15.4" fill="none" stroke="#222" stroke-width="1.75"/></svg>
<div class="t" style="left:420.30px;top:969.20px;font-size:23.14px;line-height:23.14px;letter-spacing:0.000px;font-weight:400;color:#222222;">7</div>
<div class="t" style="left:605.10px;top:969.20px;font-size:23.43px;line-height:23.43px;letter-spacing:-1.010px;font-weight:400;color:#222222;">Emily Davis</div>
<div class="t" style="left:844.30px;top:969.20px;font-size:23.14px;line-height:23.14px;letter-spacing:-0.920px;font-weight:400;color:#222222;">49,501</div>
<div class="t" style="left:1029.00px;top:969.20px;font-size:23.14px;line-height:23.14px;letter-spacing:0.000px;font-weight:400;color:#222222;transform:scaleX(1.16);transform-origin:1.0px 0;">0</div>
<div class="t" style="left:1228.30px;top:969.20px;font-size:23.14px;line-height:23.14px;letter-spacing:0.000px;font-weight:400;color:#222222;transform:scaleX(1.16);transform-origin:1.0px 0;">0</div>
<div class="t" style="left:1603.30px;top:969.20px;font-size:23.14px;line-height:23.14px;letter-spacing:0.000px;font-weight:400;color:#222222;transform:scaleX(1.16);transform-origin:1.0px 0;">0</div>
<div class="t" style="left:1798.40px;top:969.20px;font-size:23.14px;line-height:23.14px;letter-spacing:0.000px;font-weight:400;color:#222222;transform:scaleX(1.16);transform-origin:1.0px 0;">0</div>
 </div>
</div>
<!-- footer -->
<div class="a" style="left:396px;top:985px;width:1516px;height:1px;background:#dcdcdc"></div>
<div class="a" style="left:396px;top:986px;width:1516px;height:94px;background:#f8f8f8"></div>
<div class="t" style="left:420.50px;top:1017.00px;font-size:22.86px;line-height:22.86px;letter-spacing:0.000px;font-weight:700;color:#1a1a1a;">1</div>
<div class="t" style="left:436.00px;top:1017.00px;font-size:22.86px;line-height:22.86px;letter-spacing:0.000px;font-weight:400;color:#1a1a1a;">-</div>
<div class="t" style="left:451.60px;top:1017.00px;font-size:22.86px;line-height:22.86px;letter-spacing:-2.600px;font-weight:700;color:#1a1a1a;">16</div>
<div class="t" style="left:479.60px;top:1017.00px;font-size:22.86px;line-height:22.86px;letter-spacing:-0.450px;font-weight:400;color:#1a1a1a;">of 16</div>
<!-- scrollbars -->
<div class="a" style="left:1912px;top:418px;width:8px;height:653px;background:#f1f1f1;border-radius:4px"></div>
<div class="a" style="left:1912px;top:418px;width:8px;height:312px;background:#c2c2c2;border-radius:4px"></div>
<div class="a" style="left:1320px;top:1071px;width:592px;height:8px;background:#f1f1f1;border-radius:4px"></div><div class="a" style="left:1912px;top:1071px;width:8px;height:9px;background:#fff"></div>
<div class="a" style="left:396px;top:1071px;width:932px;height:8px;background:#cbcbcb;border-radius:4px"></div>
</body></html>
